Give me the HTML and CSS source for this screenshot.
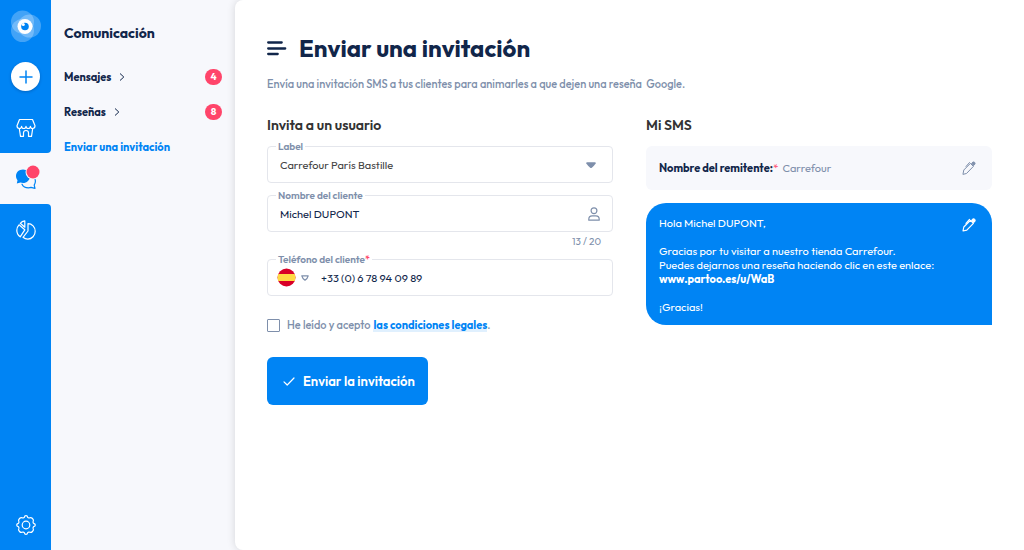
FILE: index.html
```html
<!DOCTYPE html>
<html lang="es">
<head>
  <meta charset="UTF-8">
  <meta name="viewport" content="width=device-width, initial-scale=1">
  <title>Enviar una invitación</title>
  <link rel="stylesheet" href="styles.css">
</head>
<body>
  <nav class="rail" aria-label="Principal">
    <div class="rail-group rail-top">
      <a class="rail-item" href="#" aria-label="Inicio">
        <svg width="32" height="32" viewBox="0 0 32 32">
          <g fill="#fff" fill-opacity="0.26">
            <circle cx="12.500" cy="12" r="11.500"/>
            <circle cx="12.500" cy="20.500" r="11.500"/>
            <circle cx="19.500" cy="16" r="11.500"/>
          </g>
          <circle cx="15" cy="16.500" r="7.500" fill="#fff"/>
          <circle cx="15" cy="16.500" r="3.800" fill="#0084f4"/>
          <circle cx="13.300" cy="14.500" r="1.500" fill="#fff"/>
        </svg>
      </a>
      <div class="rail-item">
        <button class="add" type="button" aria-label="Añadir">
          <svg width="14" height="14" viewBox="0 0 14 14" fill="none" stroke="#0084f4" stroke-width="1.500" stroke-linecap="round">
            <path d="M7 1v12M1 7h12"/>
          </svg>
        </button>
      </div>
      <a class="rail-item" href="#" aria-label="Establecimientos">
        <svg width="20" height="20" viewBox="0 0 20 20" fill="none" stroke="#fff" stroke-width="1.200" stroke-linecap="round" stroke-linejoin="round">
          <path d="M3.500 1.500h13l2.500 6.300c0 1.600-1 2.700-2.400 2.700-1.200 0-2.200-.9-2.200-2.200 0 1.300-1 2.200-2.200 2.200S10 9.600 10 8.300c0 1.300-1 2.200-2.200 2.200S5.600 9.600 5.600 8.300c0 1.300-1 2.200-2.200 2.200C2 10.500 1 9.400 1 7.800z"/>
          <path d="M3.300 10.500l1.200 7.800h3v-3.500c0-1.300 1-2.300 2.500-2.300s2.500 1 2.500 2.300v3.500h3l1.200-7.800"/>
        </svg>
      </a>
    </div>
    <a class="rail-item rail-active" href="#" aria-label="Comunicación">
      <svg width="24" height="26" viewBox="0 0 24 26">
        <path d="M7 5.500C3 5.500 0 8.300 0 12c0 1.700.6 3 1.500 4.200L.8 19.500l3.700-.9c.8.2 1.600.4 2.500.4 3.900 0 7-3 7-6.800S11 5.500 7 5.500z" fill="#0084f4"/>
        <path d="M6 20.200c1.200 2.600 3.800 3.600 6.500 3.600 1 0 1.700-.1 2.500-.4l4 .9-.8-3.200c.7-1.100 1.200-2.300 1.200-3.800 0-.8-.2-1.600-.5-2.300" fill="none" stroke="#0084f4" stroke-width="1.200" stroke-linejoin="round" stroke-linecap="round"/>
        <circle cx="17" cy="8" r="7.500" fill="#f7f8fc"/>
        <circle cx="17" cy="8" r="6.500" fill="#ff456a"/>
      </svg>
    </a>
    <div class="rail-group rail-bottom">
      <a class="rail-item" href="#" aria-label="Estadísticas">
        <svg width="20" height="20" viewBox="0 0 20 20" fill="none" stroke="#fff" stroke-width="1.200" stroke-linejoin="round">
          <path d="M8.800.8v6.400L4.300 3.300C5.500 1.800 7 1 8.800.8z"/>
          <path d="M3 4.800l5.800 5-4.600 7C2 15.200.8 12.900.8 10.200.8 8.200 1.600 6.300 3 4.800z"/>
          <path d="M12 3.600c4 0 7.200 3.500 7.200 7.600 0 4.300-3.300 7.900-7.400 7.900-1.900 0-3.500-.7-4.800-1.800l5-6.300z"/>
        </svg>
      </a>
      <a class="rail-item rail-last" href="#" aria-label="Ajustes">
        <svg width="20" height="20" viewBox="0 0 20 20" fill="none" stroke="#fff" stroke-width="1.200" stroke-linejoin="round">
          <path d="M8.300 2.400Q8.600.7 10 .7T11.700 2.400Q12.300 3.100 13.200 2.900Q14.900 1.900 16.500 3.500T17.100 6.800Q16.900 7.700 17.600 8.300Q19.300 8.600 19.300 10T17.600 11.700Q16.900 12.300 17.100 13.200Q18.100 14.900 16.500 16.500T13.200 17.100Q12.300 16.900 11.700 17.600Q11.400 19.300 10 19.300T8.300 17.600Q7.700 16.900 6.800 17.100Q5.100 18.100 3.500 16.500T2.900 13.200Q3.100 12.300 2.400 11.700Q.7 11.400 .7 10T2.400 8.300Q3.100 7.700 2.900 6.800Q1.900 5.100 3.500 3.500T6.800 2.900Q7.700 3.100 8.300 2.400z"/>
          <circle cx="10" cy="10" r="3.800"/>
        </svg>
      </a>
    </div>
  </nav>

  <aside class="sidebar">
    <h2 class="sidebar-title">Comunicación</h2>
    <ul class="menu">
      <li>
        <a href="#">Mensajes
          <svg class="chevron" width="6" height="8" viewBox="0 0 6 8" fill="none" stroke="#11264a"><path d="M1 .5L4.800 4 1 7.500"/></svg>
        </a>
        <span class="badge">4</span>
      </li>
      <li>
        <a href="#">Reseñas
          <svg class="chevron" width="6" height="8" viewBox="0 0 6 8" fill="none" stroke="#11264a"><path d="M1 .5L4.800 4 1 7.500"/></svg>
        </a>
        <span class="badge">8</span>
      </li>
      <li><a class="current" href="#">Enviar una invitación</a></li>
    </ul>
  </aside>

  <main class="main">
    <header class="page-head">
      <svg width="20" height="16" viewBox="0 0 20 16" fill="none" stroke="#11264a" stroke-width="2.300" stroke-linecap="round">
        <path d="M1.200 2.500h13.500M1.200 8.500h17M1.200 14h9.500"/>
      </svg>
      <h1>Enviar una invitación</h1>
    </header>
    <p class="intro">Envía una invitación SMS a tus clientes para animarles a que dejen una reseña&nbsp; Google.</p>

    <div class="columns">
      <form class="invite">
        <h2>Invita a un usuario</h2>

        <div class="field">
          <label for="place">Label</label>
          <select id="place" class="place">
            <option>Carrefour París Bastille</option>
          </select>
          <svg class="caret" width="10" height="6" viewBox="0 0 10 6"><path d="M.3 1.500Q-.2.200 1.200.200h7.600q1.400 0 .9 1.300Q8 4 5.800 5.700q-.8.500-1.600 0Q2 4 .3 1.500z" fill="#7e8fab"/></svg>
        </div>

        <div class="field">
          <label for="client">Nombre del cliente</label>
          <input id="client" type="text" value="Michel DUPONT" maxlength="20">
          <svg width="12" height="14" viewBox="0 0 12 14" fill="none" stroke="#7e8fab" stroke-width="1.200">
            <circle cx="6" cy="3.700" r="2.900"/>
            <path d="M.8 13.200v-1c0-2 1.500-3.300 3.300-3.300h3.800c1.800 0 3.300 1.300 3.300 3.300v1z" stroke-linejoin="round"/>
          </svg>
        </div>
        <div class="counter">13 / 20</div>

        <div class="field phone">
          <label for="phone">Teléfono del cliente<span class="required">*</span></label>
          <div class="country">
            <svg width="19" height="19" viewBox="0 0 19 19">
              <clipPath id="disc"><circle cx="9.500" cy="9.500" r="9"/></clipPath>
              <g clip-path="url(#disc)">
                <rect width="19" height="19" fill="#d80027"/>
                <rect y="6" width="19" height="7" fill="#ffda44"/>
              </g>
            </svg>
            <svg width="8" height="6" viewBox="0 0 8 6" fill="none" stroke="#7e8fab" stroke-width="1.200" stroke-linejoin="round"><path d="M.8.8h6.400Q6.600 3.300 4 5.200 1.400 3.300.8.800z"/></svg>
            <select aria-label="País">
              <option>España</option>
            </select>
          </div>
          <input id="phone" type="tel" value="+33 (0) 6 78 94 09 89">
        </div>

        <div class="terms">
          <input id="terms" type="checkbox">
          <label for="terms">He leído y acepto</label>
          <span><a href="#">las condiciones legales</a>.</span>
        </div>

        <button class="submit" type="submit">
          <svg width="12" height="9" viewBox="0 0 12 9" fill="none" stroke="#fff" stroke-width="1.200" stroke-linecap="round" stroke-linejoin="round"><path d="M1 4.800l3.200 3.200L11 1"/></svg>
          Enviar la invitación
        </button>
      </form>

      <section class="sms">
        <h2>Mi SMS</h2>
        <div class="sender">
          <p><b>Nombre del remitente:</b><span class="required">*</span> <span class="sender-name">Carrefour</span></p>
          <button class="edit" type="button" aria-label="Editar remitente">
            <svg width="14" height="14" viewBox="0 0 14 14" fill="none" stroke="currentColor" stroke-linejoin="round" stroke-linecap="round">
              <path d="M1 13l.8-4L8.400 2.400l3 3L4.800 12.200z"/>
              <path d="M4 5.500L7.500 1.500"/>
              <path d="M9.700 2.300l1.200-1.200c1.200-.6 2.700.7 2 2l-1.200 1.300z" fill="currentColor"/>
            </svg>
          </button>
        </div>
        <div class="bubble">
          <div class="message">
            <p>Hola Michel DUPONT,</p>
            <p>Gracias por tu visitar a nuestro tienda Carrefour.<br>
              Puedes dejarnos una reseña haciendo clic en este enlace:<br>
              <a href="#">www.partoo.es/u/WaB</a></p>
            <p>¡Gracias!</p>
          </div>
          <button class="edit" type="button" aria-label="Editar mensaje">
            <svg width="14" height="14" viewBox="0 0 14 14" fill="none" stroke="currentColor" stroke-width="1.200" stroke-linejoin="round" stroke-linecap="round">
              <path d="M1 13l.8-4L8.400 2.400l3 3L4.800 12.200z"/>
              <path d="M4 5.500L7.500 1.500"/>
              <path d="M9.700 2.300l1.200-1.200c1.200-.6 2.700.7 2 2l-1.200 1.300z" fill="currentColor"/>
            </svg>
          </button>
        </div>
      </section>
    </div>
  </main>
</body>
</html>
```
FILE: styles.css
```css
* {
  box-sizing: border-box;
}

body {
  margin: 0;
  min-height: 100vh;
  display: flex;
  background: #f7f8fc;
  color: #11264a;
  font-family: Outfit, Lato, sans-serif;
  font-size: 11px;
  line-height: 14px;
}

h1, h2, p, ul {
  margin: 0;
  padding: 0;
}

a {
  color: inherit;
  text-decoration: none;
}

button, input, select {
  font: inherit;
  color: inherit;
  border: none;
  background: none;
  padding: 0;
  margin: 0;
}

button {
  cursor: pointer;
}

svg {
  display: block;
  flex: none;
}

/* blue icon rail */
.rail {
  width: 51px;
  flex: none;
  display: flex;
  flex-direction: column;
}

.rail-group {
  display: flex;
  flex-direction: column;
  background: #0084f4;
}

.rail-top {
  border-bottom-right-radius: 4px;
}

.rail-bottom {
  flex: 1;
  border-top-right-radius: 4px;
}

.rail-item {
  height: 51px;
  display: flex;
  align-items: center;
  justify-content: center;
}

.rail-active svg {
  margin: 0 0 4px 4px;
}

.rail-last {
  margin-top: auto;
}

.add {
  width: 29px;
  height: 29px;
  border-radius: 50%;
  background: #fff;
  box-shadow: 0 1px 3px rgba(0, 30, 80, 0.3);
  display: flex;
  align-items: center;
  justify-content: center;
}

/* section menu */
.sidebar {
  width: 184px;
  flex: none;
  padding: 24px 13px;
}

.sidebar-title {
  font-size: 14px;
  line-height: 18px;
}

.menu {
  list-style: none;
  margin-top: 17px;
}

.menu li {
  height: 35px;
  display: flex;
  align-items: center;
  justify-content: space-between;
}

.menu a {
  display: flex;
  align-items: center;
  gap: 8px;
  font-weight: bold;
}

.menu .current {
  color: #0084f4;
}

.badge {
  width: 17px;
  height: 16px;
  border-radius: 8px;
  background: #ff456a;
  color: #fff;
  font-size: 10px;
  font-weight: bold;
  line-height: 16px;
  text-align: center;
}

/* page */
.main {
  flex: 1;
  min-width: 0;
  padding: 32px;
  background: #fff;
  border-radius: 8px 0 0 8px;
  box-shadow: 0 0 8px rgba(0, 0, 0, 0.14);
}

.page-head {
  display: flex;
  align-items: center;
  gap: 12px;
}

.page-head h1 {
  font-size: 24px;
  line-height: 32px;
}

.intro {
  margin-top: 13px;
  color: #7e8fab;
  font-weight: 500;
}

.columns {
  display: grid;
  grid-template-columns: 1fr 1fr;
  gap: 33px;
  margin-top: 26px;
}

.columns h2 {
  color: #333;
  font-size: 14px;
  font-weight: 600;
  line-height: 17px;
}

.field {
  position: relative;
  display: flex;
  align-items: center;
  height: 37px;
  margin-top: 12px;
  padding: 0 12px;
  border: 1px solid #e4e6ec;
  border-radius: 4px;
}

.field label {
  position: absolute;
  top: -6px;
  left: 8px;
  padding: 0 2px;
  background: #fff;
  color: #7e8fab;
  font-size: 10px;
  font-weight: 600;
  line-height: 12px;
}

.field > input,
.place {
  flex: 1;
  min-width: 0;
  height: 35px;
  appearance: none;
  outline: none;
}

.place {
  color: #444;
}

.caret {
  margin-right: 4px;
}

.required {
  color: #ff456a;
}

.counter {
  margin-top: 3px;
  padding-right: 12px;
  color: #7e8fab;
  font-size: 10px;
  text-align: right;
}

.phone {
  margin-top: 10px;
  padding-left: 9px;
  gap: 12px;
}

.country {
  position: relative;
  display: flex;
  align-items: center;
  gap: 5px;
}

.country select {
  position: absolute;
  inset: 0;
  width: 100%;
  opacity: 0;
}

.terms {
  display: flex;
  align-items: center;
  gap: 3px;
  margin-top: 22px;
  color: #7e8fab;
  font-weight: 500;
}

.terms input {
  appearance: none;
  width: 13px;
  height: 13px;
  margin-right: 4px;
  border: 1px solid #7e8fab;
  border-radius: 1px;
}

.terms input:checked {
  background: #0084f4;
}

.terms a {
  color: #0084f4;
  font-weight: bold;
  box-shadow: inset 0 -3px #e0f0fe;
}

.submit {
  display: flex;
  align-items: center;
  gap: 8px;
  height: 48px;
  margin-top: 25px;
  padding: 0 13px 0 16px;
  border-radius: 6px;
  background: #0084f4;
  color: #fff;
  font-size: 13px;
  font-weight: 600;
}

/* sms preview */
.sender {
  display: flex;
  align-items: center;
  justify-content: space-between;
  height: 44px;
  margin-top: 12px;
  padding: 0 16px 0 13px;
  border-radius: 6px;
  background: #f7f8fc;
}

.sender-name,
.sender .edit {
  color: #7e8fab;
}

.sender-name {
  margin-left: 2px;
}

.bubble {
  display: flex;
  align-items: flex-start;
  justify-content: space-between;
  margin-top: 13px;
  padding: 13px 16px 11px 13px;
  border-radius: 20px 20px 0 20px;
  background: #0084f4;
  color: #fff;
}

.message p + p {
  margin-top: 14px;
}

.message a {
  font-weight: bold;
}

.bubble .edit {
  margin-top: 2px;
}
```
